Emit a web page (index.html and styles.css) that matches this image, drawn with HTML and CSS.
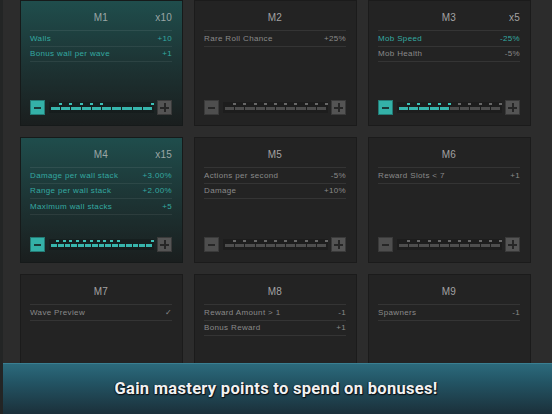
FILE: index.html
```html
<!DOCTYPE html>
<html>
<head>
<meta charset="utf-8">
<link rel="stylesheet" href="styles.css">
</head>
<body>
<div class="screen">
  <div class="grid">
    <section class="card active">
      <header class="card-head"><span></span><h2 class="card-title">M1</h2><span class="mult">x10</span></header>
      <ul class="stats">
        <li class="stat on"><span>Walls</span><span>+10</span></li>
        <li class="stat on"><span>Bonus wall per wave</span><span>+1</span></li>
      </ul>
      <div class="slider">
        <span class="btn minus on"></span>
        <div class="track"><div class="segs">
          <i class="seg on t"></i><i class="seg on t"></i><i class="seg on t"></i><i class="seg on t"></i><i class="seg on t"></i><i class="seg on"></i><i class="seg on"></i><i class="seg on"></i><i class="seg on"></i><i class="seg on t"></i>
        </div></div>
        <span class="btn plus"></span>
      </div>
    </section>

    <section class="card">
      <header class="card-head"><span></span><h2 class="card-title">M2</h2><span class="mult"></span></header>
      <ul class="stats">
        <li class="stat"><span>Rare Roll Chance</span><span>+25%</span></li>
      </ul>
      <div class="slider">
        <span class="btn minus"></span>
        <div class="track"><div class="segs">
          <i class="seg t"></i><i class="seg t"></i><i class="seg t"></i><i class="seg t"></i><i class="seg t"></i><i class="seg t"></i><i class="seg t"></i><i class="seg t"></i><i class="seg t"></i><i class="seg t"></i>
        </div></div>
        <span class="btn plus"></span>
      </div>
    </section>

    <section class="card">
      <header class="card-head"><span></span><h2 class="card-title">M3</h2><span class="mult">x5</span></header>
      <ul class="stats">
        <li class="stat on"><span>Mob Speed</span><span>-25%</span></li>
        <li class="stat"><span>Mob Health</span><span>-5%</span></li>
      </ul>
      <div class="slider">
        <span class="btn minus on"></span>
        <div class="track"><div class="segs">
          <i class="seg on t"></i><i class="seg on t"></i><i class="seg on t"></i><i class="seg on t"></i><i class="seg on t"></i><i class="seg t"></i><i class="seg t"></i><i class="seg t"></i><i class="seg t"></i><i class="seg t"></i>
        </div></div>
        <span class="btn plus"></span>
      </div>
    </section>

    <section class="card active">
      <header class="card-head"><span></span><h2 class="card-title">M4</h2><span class="mult">x15</span></header>
      <ul class="stats">
        <li class="stat on"><span>Damage per wall stack</span><span>+3.00%</span></li>
        <li class="stat on"><span>Range per wall stack</span><span>+2.00%</span></li>
        <li class="stat on"><span>Maximum wall stacks</span><span>+5</span></li>
      </ul>
      <div class="slider">
        <span class="btn minus on"></span>
        <div class="track"><div class="segs">
          <i class="seg on t"></i><i class="seg on t"></i><i class="seg on t"></i><i class="seg on t"></i><i class="seg on t"></i><i class="seg on t"></i><i class="seg on t"></i><i class="seg on t"></i><i class="seg on t"></i><i class="seg on t"></i><i class="seg on"></i><i class="seg on"></i><i class="seg on"></i><i class="seg on"></i><i class="seg on t"></i>
        </div></div>
        <span class="btn plus"></span>
      </div>
    </section>

    <section class="card">
      <header class="card-head"><span></span><h2 class="card-title">M5</h2><span class="mult"></span></header>
      <ul class="stats">
        <li class="stat"><span>Actions per second</span><span>-5%</span></li>
        <li class="stat"><span>Damage</span><span>+10%</span></li>
      </ul>
      <div class="slider">
        <span class="btn minus"></span>
        <div class="track"><div class="segs">
          <i class="seg t"></i><i class="seg t"></i><i class="seg t"></i><i class="seg t"></i><i class="seg t"></i><i class="seg t"></i><i class="seg t"></i><i class="seg t"></i><i class="seg t"></i><i class="seg t"></i>
        </div></div>
        <span class="btn plus"></span>
      </div>
    </section>

    <section class="card">
      <header class="card-head"><span></span><h2 class="card-title">M6</h2><span class="mult"></span></header>
      <ul class="stats">
        <li class="stat"><span>Reward Slots &lt; 7</span><span>+1</span></li>
      </ul>
      <div class="slider">
        <span class="btn minus"></span>
        <div class="track"><div class="segs">
          <i class="seg t"></i><i class="seg t"></i><i class="seg t"></i><i class="seg t"></i><i class="seg t"></i><i class="seg t"></i><i class="seg t"></i><i class="seg t"></i><i class="seg t"></i><i class="seg t"></i>
        </div></div>
        <span class="btn plus"></span>
      </div>
    </section>

    <section class="card">
      <header class="card-head"><span></span><h2 class="card-title">M7</h2><span class="mult"></span></header>
      <ul class="stats">
        <li class="stat"><span>Wave Preview</span><span>✓</span></li>
      </ul>
      <div class="slider">
        <span class="btn minus"></span>
        <div class="track"><div class="segs">
          <i class="seg t"></i><i class="seg t"></i><i class="seg t"></i><i class="seg t"></i><i class="seg t"></i><i class="seg t"></i><i class="seg t"></i><i class="seg t"></i><i class="seg t"></i><i class="seg t"></i>
        </div></div>
        <span class="btn plus"></span>
      </div>
    </section>

    <section class="card">
      <header class="card-head"><span></span><h2 class="card-title">M8</h2><span class="mult"></span></header>
      <ul class="stats">
        <li class="stat"><span>Reward Amount &gt; 1</span><span>-1</span></li>
        <li class="stat"><span>Bonus Reward</span><span>+1</span></li>
      </ul>
      <div class="slider">
        <span class="btn minus"></span>
        <div class="track"><div class="segs">
          <i class="seg t"></i><i class="seg t"></i><i class="seg t"></i><i class="seg t"></i><i class="seg t"></i><i class="seg t"></i><i class="seg t"></i><i class="seg t"></i><i class="seg t"></i><i class="seg t"></i>
        </div></div>
        <span class="btn plus"></span>
      </div>
    </section>

    <section class="card">
      <header class="card-head"><span></span><h2 class="card-title">M9</h2><span class="mult"></span></header>
      <ul class="stats">
        <li class="stat"><span>Spawners</span><span>-1</span></li>
      </ul>
      <div class="slider">
        <span class="btn minus"></span>
        <div class="track"><div class="segs">
          <i class="seg t"></i><i class="seg t"></i><i class="seg t"></i><i class="seg t"></i><i class="seg t"></i><i class="seg t"></i><i class="seg t"></i><i class="seg t"></i><i class="seg t"></i><i class="seg t"></i>
        </div></div>
        <span class="btn plus"></span>
      </div>
    </section>
  </div>

  <div class="banner"><p class="banner-text">Gain mastery points to spend on bonuses!</p></div>
</div>
</body>
</html>
```

FILE: styles.css
```css
* { box-sizing: border-box; }
html, body {
  margin: 0;
  padding: 0;
  width: 552px;
  height: 414px;
  overflow: hidden;
  background: #2b2b2b;
}
body {
  font-family: "Liberation Sans", Arial, sans-serif;
}
.screen {
  position: relative;
  width: 552px;
  height: 414px;
  overflow: hidden;
  border-left: 3px solid #232525;
  background: #2c2c2c;
}
.grid {
  display: grid;
  grid-template-columns: repeat(3, 163px);
  grid-auto-rows: 126px;
  column-gap: 11px;
  row-gap: 11px;
  padding-left: 17px;
}
.card {
  display: flex;
  flex-direction: column;
  background: #232323;
  border: 1px solid #1b1b1b;
  padding: 0 10px 10px 9px;
}
.card.active {
  background: linear-gradient(to bottom, #1f4d4c 0%, #1d3434 50%, #1a1e1e 100%);
  border-color: #161a1a;
}
.card-head {
  display: grid;
  grid-template-columns: 1fr auto 1fr;
  align-items: center;
  height: 30px;
  padding-top: 4px;
  border-bottom: 1px solid rgba(255,255,255,0.08);
}
.card-title {
  margin: 0;
  font-size: 10px;
  font-weight: normal;
  color: #a2a2a2;
  letter-spacing: 0.2px;
}
.mult {
  justify-self: end;
  font-size: 10px;
  color: #a2a2a2;
  letter-spacing: 0.2px;
}
.active .card-title, .active .mult { color: #9aa6a5; }
.stats {
  list-style: none;
  margin: 0;
  padding: 0;
}
.stat {
  display: flex;
  justify-content: space-between;
  align-items: center;
  height: 15.5px;
  border-bottom: 1px solid rgba(255,255,255,0.08);
  font-size: 8px;
  letter-spacing: 0.35px;
  color: #8a8a8a;
}
.stat.on { color: #34a9a1; }
.active .stat { border-bottom-color: rgba(255,255,255,0.07); }
.slider {
  margin-top: auto;
  display: flex;
  align-items: center;
  height: 15px;
}
.btn {
  position: relative;
  flex: none;
  width: 15px;
  height: 15px;
  background: #4e4e4e;
  border: 1px solid #3a3a3a;
}
.btn.on {
  background: #34b1a8;
  border-color: #237b75;
}
.btn::before, .plus::after {
  content: "";
  position: absolute;
  left: 50%;
  top: 50%;
  background: #262626;
}
.btn.on::before { background: #1b3a38; }
.minus::before {
  width: 7px;
  height: 2px;
  margin: -1px 0 0 -3.5px;
}
.plus::before {
  width: 9px;
  height: 2px;
  margin: -1px 0 0 -4.5px;
}
.plus::after {
  width: 2px;
  height: 9px;
  margin: -4.5px 0 0 -1px;
}
.plus { background: #545454; }
.track {
  flex: 1;
  height: 11px;
  margin: 0 3px 0 4px;
  padding: 0 2px;
  display: flex;
  align-items: center;
  background: rgba(0,0,0,0.16);
}
.segs {
  flex: 1;
  display: flex;
  gap: 1px;
  height: 3px;
  margin-top: 2px;
}
.seg {
  position: relative;
  flex: 1;
  background: #4d4d4d;
}
.seg.on { background: #37b5ac; }
.seg.t::after {
  content: "";
  position: absolute;
  right: -2px;
  top: -4px;
  width: 3px;
  height: 2px;
  background: #676767;
}
.seg.on.t::after { background: #3cc0b6; }
.banner {
  position: absolute;
  left: -3px;
  right: 0;
  bottom: 0;
  height: 51px;
  display: flex;
  align-items: center;
  justify-content: center;
  background: linear-gradient(to bottom, #2c6a7c 0%, #235565 35%, #1b303a 100%);
  border-top: 1px solid #3a7f92;
}
.banner-text {
  margin: 0 0 2px 0;
  font-family: Roboto, "Liberation Sans", sans-serif;
  font-weight: 700;
  font-size: 16.5px;
  letter-spacing: 0.3px;
  color: #f2f2f2;
  text-shadow: 1px 1px 0 #0d1418, -1px 0 0 rgba(10,20,24,0.6), 0 1px 2px rgba(0,0,0,0.7);
}
```
